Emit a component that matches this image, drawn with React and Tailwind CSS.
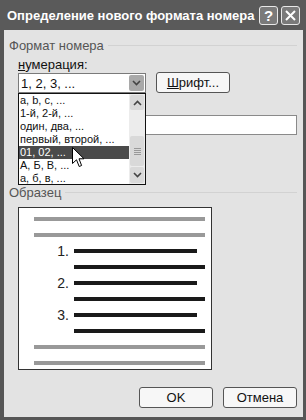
export default function App() {
  const items = [
    "a, b, c, ...",
    "1-й, 2-й, ...",
    "один, два, ...",
    "первый, второй, ...",
    "01, 02, ...",
    "А, Б, В, ...",
    "а, б, в, ...",
  ];

  return (
    <div className="w-[306px] h-[420px] bg-[#565656] flex flex-col font-['Liberation_Sans',Arial,sans-serif] overflow-hidden">
      {/* Заголовок окна */}
      <div className="h-[30px] shrink-0 flex items-center pl-[7px] pr-[6px] bg-[#5a5a5a]">
        <div className="flex-1 min-w-0 text-white font-bold text-[13px] leading-none whitespace-nowrap">
          Определение нового формата номера
        </div>
        <div className="flex gap-[3px] shrink-0">
          <div className="w-[19px] h-[19px] rounded-[3px] border border-[#e8e8e8] bg-[#7a7a7a] flex items-center justify-center text-white font-bold text-[15px] leading-none">
            ?
          </div>
          <div className="w-[19px] h-[19px] rounded-[3px] border border-[#e8e8e8] bg-[#7a7a7a] flex items-center justify-center">
            <svg width="13" height="13" viewBox="0 0 13 13">
              <path d="M2 2 L11 11 M11 2 L2 11" stroke="#fff" strokeWidth="2" />
            </svg>
          </div>
        </div>
      </div>

      {/* Тело диалога */}
      <div className="flex-1 ml-[4px] mr-[3px] mb-[3px] bg-[#e3e3e3] relative text-[13px] text-[#111]">
        {/* Формат номера */}
        <div className="flex items-center gap-[4px] mt-[8px] pl-[5px] pr-[6px]">
          <span className="text-[#555] leading-[15px]">Формат номера</span>
          <div className="flex-1 h-px bg-[#d2d2d2]" />
        </div>

        <div className="mt-[4px] pl-[14px] leading-[15px]">
          <span className="underline">н</span>умерация:
        </div>

        <div className="flex items-start gap-[10px] pl-[14px]">
          <div className="mt-px w-[128px] h-[20px] bg-white border border-[#7a7a7a] flex items-center justify-between pl-[2px] pr-px">
            <span className="leading-none">1, 2, 3, ...</span>
            <div className="w-[15px] h-[16px] bg-[#a9a9a9] rounded-[2px] flex items-center justify-center">
              <svg width="9" height="6" viewBox="0 0 9 6">
                <path d="M1 1 L4.5 4.5 L8 1" stroke="#444" strokeWidth="1.6" fill="none" />
              </svg>
            </div>
          </div>
          <div className="w-[74px] h-[21px] rounded-[3px] border border-[#555] bg-[#f7f7f7] flex items-center justify-center leading-none">
            <span>
              <span className="underline">Ш</span>рифт...
            </span>
          </div>
        </div>

        {/* поле формата (подпись закрыта списком) */}
        <div className="mt-[22px] ml-[14px] mr-[6px] h-[20px] bg-white border border-[#8a8a8a]" />

        {/* Образец */}
        <div className="flex items-center gap-[4px] mt-[50px] pl-[5px] pr-[6px]">
          <span className="text-[#555] leading-[15px]">Образец</span>
          <div className="flex-1 h-px bg-[#d2d2d2]" />
        </div>

        <div className="mt-[7px] ml-[14px] w-[194px] h-[163px] bg-white border border-[#333] pt-[9px] pl-[15px] pr-[6px] flex flex-col gap-[12px]">
          <div className="h-[4px] bg-[#999]" />
          <div className="h-[4px] bg-[#999]" />
          {[1, 2, 3].map((n) => (
            <div key={n} className="flex flex-col gap-[12px]">
              <div className="flex items-center h-[4px]">
                <span className="w-[40px] text-right pr-[5px] text-[14px] text-[#222] leading-none">{n}.</span>
                <div className="w-[123px] h-[4px] bg-[#1a1a1a]" />
              </div>
              <div className="ml-[40px] h-[4px] bg-[#1a1a1a]" />
            </div>
          ))}
          <div className="h-[4px] bg-[#999]" />
          <div className="h-[4px] bg-[#999]" />
        </div>

        <div className="flex justify-end gap-[10px] mt-[17px] pr-[6px]">
          <div className="w-[74px] h-[21px] rounded-[3px] border border-[#555] bg-[#f7f7f7] flex items-center justify-center leading-none">
            OK
          </div>
          <div className="w-[74px] h-[21px] rounded-[3px] border border-[#555] bg-[#f7f7f7] flex items-center justify-center leading-none">
            Отмена
          </div>
        </div>

        {/* Раскрытый список */}
        <div className="absolute left-[14px] top-[63px] w-[128px] h-[92px] bg-white border border-[#111] flex text-[11px]">
          <div className="flex-1 flex flex-col">
            {items.map((t, i) => (
              <div
                key={t}
                className={`h-[13px] leading-[13px] pl-px whitespace-nowrap ${i === 4 ? "bg-[#4a4a4a] text-white" : ""}`}
              >
                {t}
              </div>
            ))}
          </div>
          <div className="w-[16px] bg-[#ececec] flex flex-col justify-between py-px">
            <div className="h-[15px] mx-px bg-[#d9d9d9] rounded-[2px] flex items-center justify-center">
              <svg width="9" height="6" viewBox="0 0 9 6">
                <path d="M1 5 L4.5 1.5 L8 5" stroke="#444" strokeWidth="1.6" fill="none" />
              </svg>
            </div>
            <div className="h-[30px] mx-px mt-[26px] bg-[#d9d9d9] rounded-[2px] flex flex-col items-center justify-center gap-px">
              <div className="w-[7px] h-px bg-[#999]" />
              <div className="w-[7px] h-px bg-[#999]" />
              <div className="w-[7px] h-px bg-[#999]" />
              <div className="w-[7px] h-px bg-[#999]" />
            </div>
            <div className="flex-1" />
            <div className="h-[16px] mx-px bg-[#d9d9d9] rounded-[2px] flex items-center justify-center">
              <svg width="9" height="6" viewBox="0 0 9 6">
                <path d="M1 1 L4.5 4.5 L8 1" stroke="#444" strokeWidth="1.6" fill="none" />
              </svg>
            </div>
          </div>
        </div>

        {/* Курсор мыши */}
        <svg className="absolute left-[68px] top-[117px]" width="13" height="21" viewBox="0 0 13 21">
          <path
            d="M0.5 0.5 L0.5 16.5 L4.5 12.8 L7.2 19.5 L9.6 18.5 L7 11.8 L12 11.8 Z"
            fill="#fff"
            stroke="#000"
            strokeWidth="1"
            strokeLinejoin="miter"
          />
        </svg>
      </div>
    </div>
  );
}
